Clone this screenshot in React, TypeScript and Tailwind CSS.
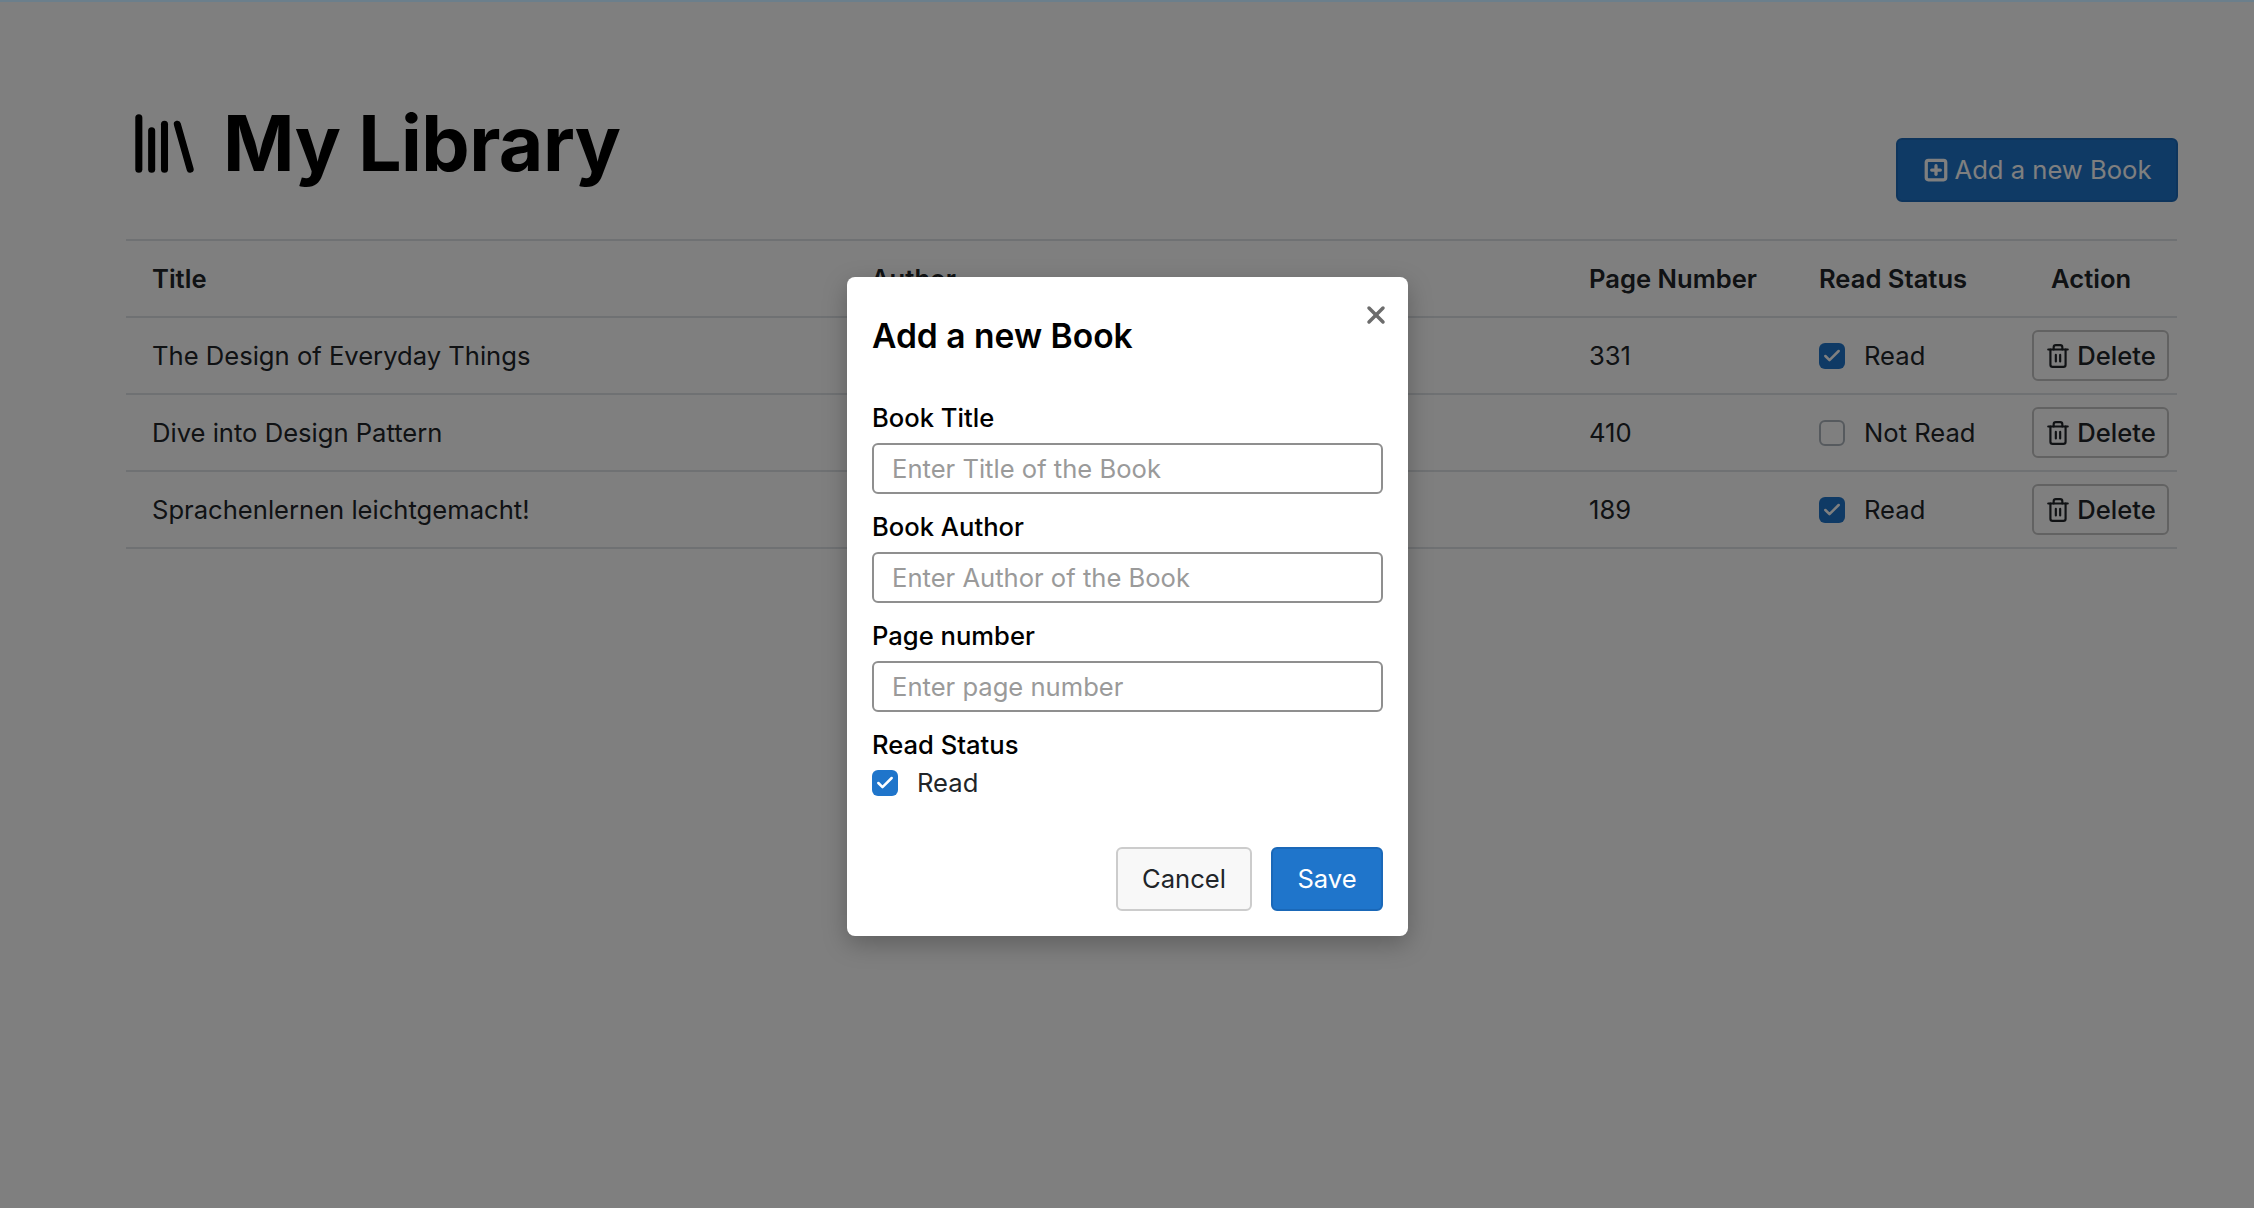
import { Library, SquarePlus, Trash2, X, Check } from 'lucide-react';

const books = [
  { title: 'The Design of Everyday Things', author: 'Don Norman', pages: 331, read: true },
  { title: 'Dive into Design Pattern', author: 'Alexander Shvets', pages: 410, read: false },
  { title: 'Sprachenlernen leichtgemacht!', author: 'Olly Richards', pages: 189, read: true },
];

function CheckBox({ checked }: { checked: boolean }) {
  return (
    <span
      className={
        checked
          ? 'flex h-[26px] w-[26px] shrink-0 items-center justify-center rounded-[6px] bg-[#1f75cb]'
          : 'flex h-[26px] w-[26px] shrink-0 rounded-[6px] border-2 border-[#adb5bd] bg-white'
      }
    >
      {checked && <Check className="h-[20px] w-[20px] text-white" strokeWidth={3} />}
    </span>
  );
}

function Field({ label, placeholder }: { label: string; placeholder: string }) {
  return (
    <div className="mb-[14px]">
      <label className="mb-[6px] block text-[25.6px] font-[450] leading-[38px] text-black">{label}</label>
      <input
        readOnly
        placeholder={placeholder}
        className="block h-[51px] w-full rounded-[6px] border-2 border-[#8f8f8f] bg-white px-[18px] text-[25.6px] text-[#212529] outline-none placeholder:text-[#9a9a9a]"
      />
    </div>
  );
}

export default function App() {
  return (
    <div className="relative h-[1208px] overflow-hidden bg-white font-['Inter',sans-serif] text-[25.6px] text-[#212529]">
      <div className="pl-[126px] pr-[77px] pt-[98px]">
        <div className="flex items-end justify-between pb-[36px]">
          <h1 className="flex items-center text-[76.8px] font-bold leading-[92px] tracking-[-0.007em] text-black">
            <Library className="h-[77px] w-[77px] -translate-y-[1px]" strokeWidth={2.2} />
            <span className="ml-[20px]">My Library</span>
          </h1>
          <button className="mb-[-12px] mr-[-1px] flex h-[64px] w-[282px] items-center justify-center gap-[6px] rounded-[6px] border-2 border-[#1a68b8] bg-[#1f75cb] text-[25.6px] text-white">
            <SquarePlus className="h-[26px] w-[26px]" strokeWidth={3} />
            Add a new Book
          </button>
        </div>
        <div className="pt-[13px]">
          <table className="w-full table-fixed border-collapse">
            <colgroup>
              <col className="w-[719px]" />
              <col className="w-[718px]" />
              <col className="w-[230px]" />
              <col className="w-[232px]" />
              <col />
            </colgroup>
            <thead>
              <tr className="h-[77px] border-y-2 border-[#dee2e6] text-left">
                <th className="px-[26px] pt-[2px] font-semibold">Title</th>
                <th className="px-[26px] pt-[2px] font-semibold">Author</th>
                <th className="px-[26px] pt-[2px] font-semibold whitespace-nowrap">Page Number</th>
                <th className="px-[26px] pt-[2px] font-semibold whitespace-nowrap">Read Status</th>
                <th className="px-[26px] pt-[2px] font-semibold">Action</th>
              </tr>
            </thead>
            <tbody>
              {books.map((b) => (
                <tr key={b.title} className="h-[77px] border-b-2 border-[#dee2e6]">
                  <td className="px-[26px] pt-[2px]">{b.title}</td>
                  <td className="px-[26px] pt-[2px]">{b.author}</td>
                  <td className="px-[26px] pt-[2px]">{b.pages}</td>
                  <td className="px-[26px] pt-[2px]">
                    <div className="flex items-center gap-[19px] whitespace-nowrap">
                      <CheckBox checked={b.read} />
                      {b.read ? 'Read' : 'Not Read'}
                    </div>
                  </td>
                  <td className="pl-[7px]">
                    <button className="flex h-[51px] w-[137px] items-center justify-center gap-[6px] rounded-[6px] border-2 border-[#c4c4c4] text-[25.6px] font-medium text-[#212529]">
                      <Trash2 className="h-[26px] w-[26px]" strokeWidth={2} />
                      <span className="pt-[2px]">Delete</span>
                    </button>
                  </td>
                </tr>
              ))}
            </tbody>
          </table>
        </div>
      </div>

      {/* backdrop + modal */}
      <div className="absolute inset-0 border-t-2 border-[#6b7f8c] bg-black/50" />
      <div className="absolute inset-0 pl-[847px] pt-[277px]">
        <div className="relative h-[659px] w-[561px] rounded-[8px] bg-white px-[25px] pt-[20px] shadow-[0_8px_24px_rgba(0,0,0,0.25)]">
          <X className="absolute right-[18px] top-[24px] h-[28px] w-[28px] text-[#6c6c6c]" strokeWidth={3} />
          <h2 className="mb-[24px] text-[33.6px] font-semibold leading-[78px] text-black">Add a new Book</h2>
          <Field label="Book Title" placeholder="Enter Title of the Book" />
          <Field label="Book Author" placeholder="Enter Author of the Book" />
          <Field label="Page number" placeholder="Enter page number" />
          <div className="font-[450] leading-[38px] text-black">Read Status</div>
          <div className="flex items-center gap-[19px]">
            <CheckBox checked />
            Read
          </div>
          <div className="mt-[45px] flex justify-end gap-[19px]">
            <button className="h-[64px] w-[136px] rounded-[6px] border-2 border-[#cccccc] bg-[#f8f8f8] text-[#212529]">Cancel</button>
            <button className="h-[64px] w-[112px] rounded-[6px] border-2 border-[#1a68b8] bg-[#1f75cb] text-white">Save</button>
          </div>
        </div>
      </div>
    </div>
  );
}
